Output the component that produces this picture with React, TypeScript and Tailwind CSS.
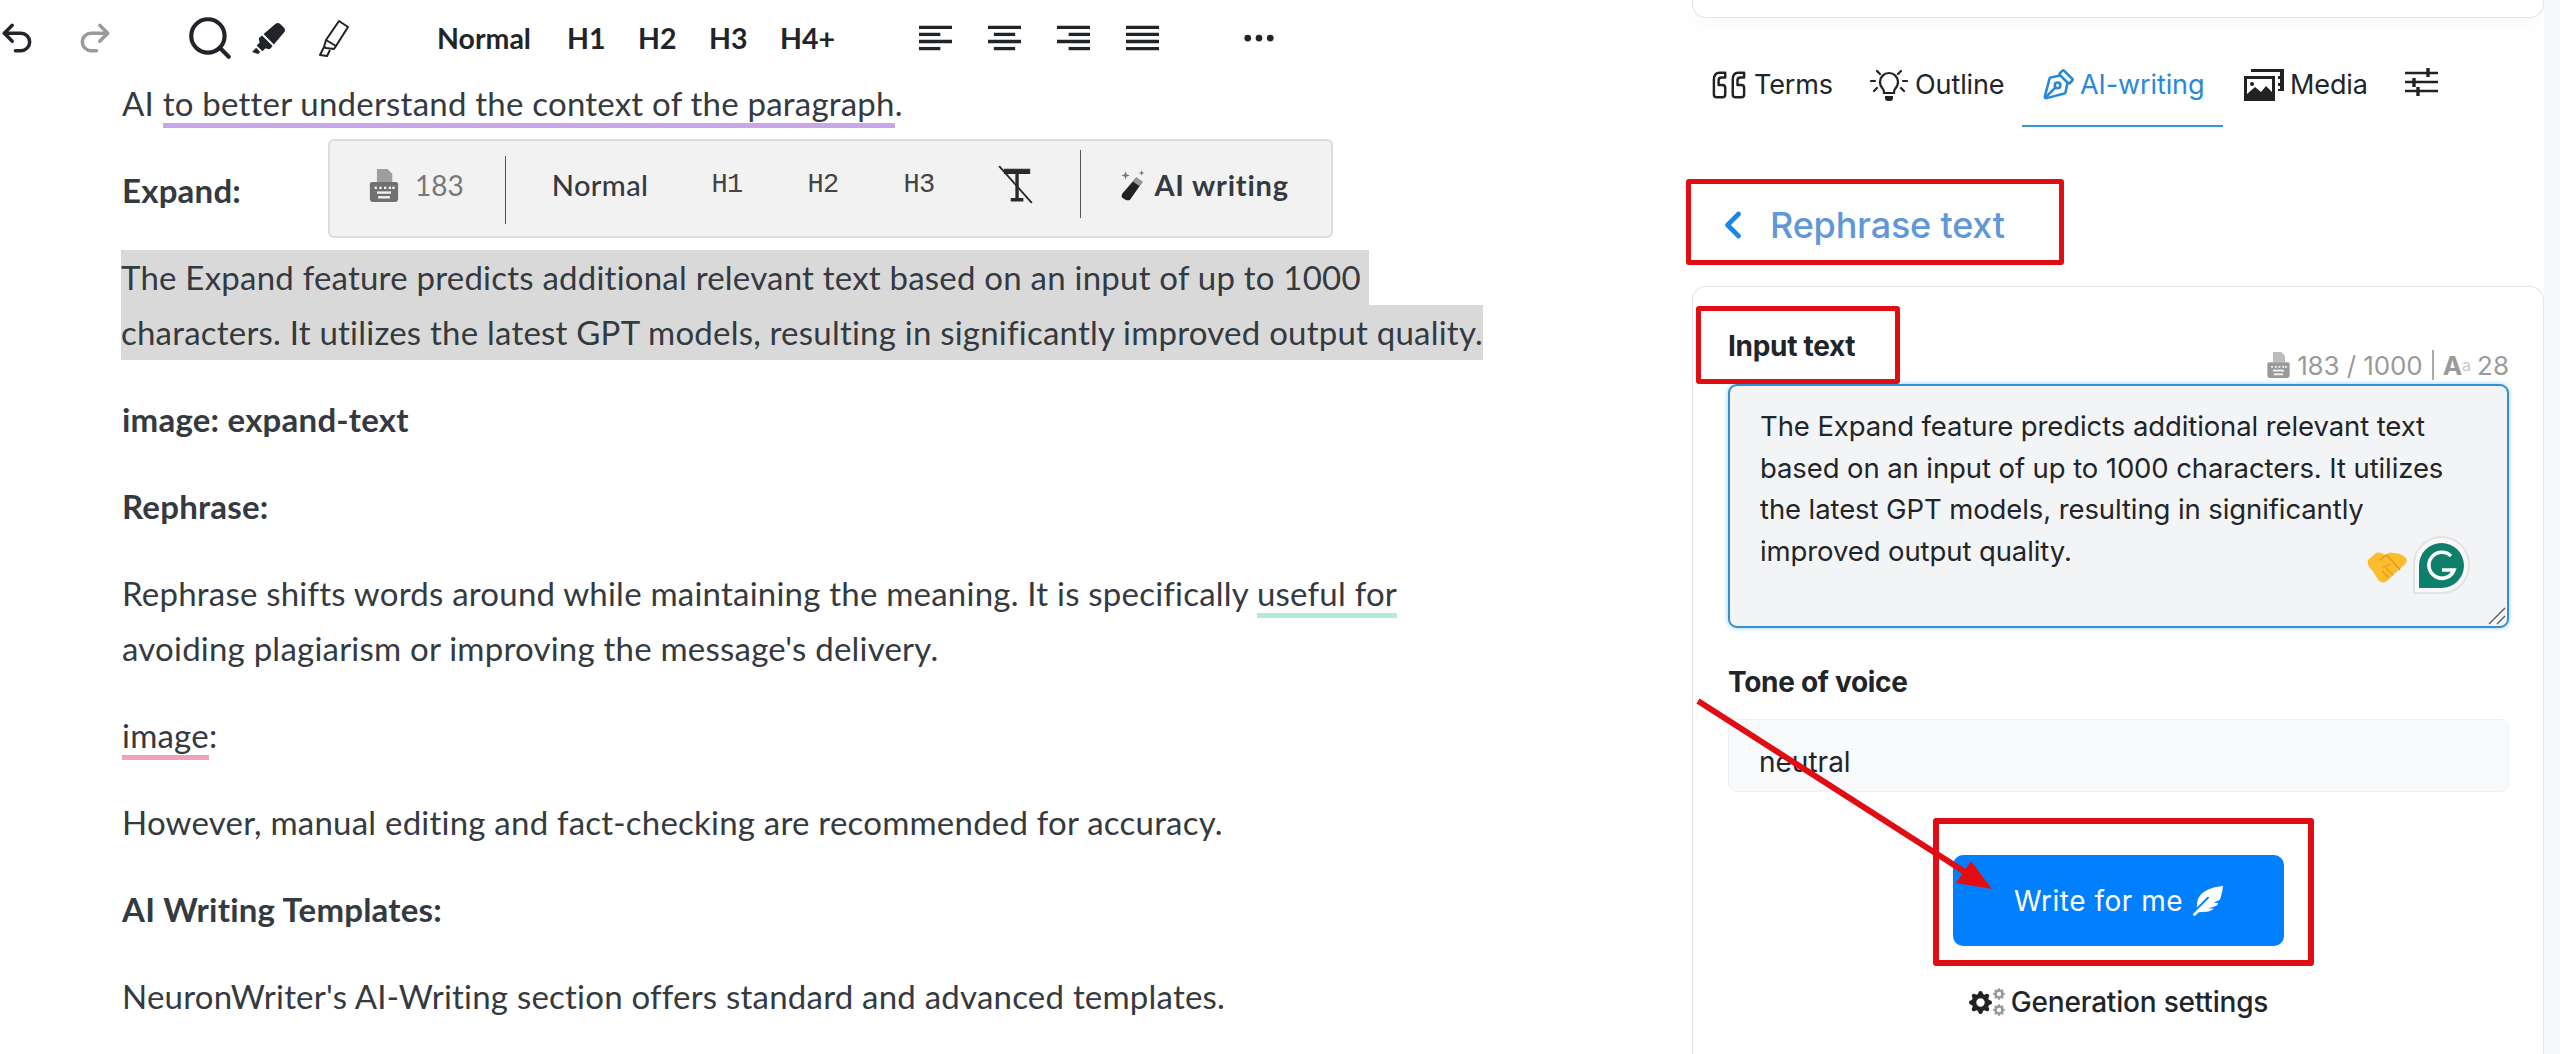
import React from "react";
import { BsThreeDots, BsGearFill } from "react-icons/bs";
import { FaFeatherAlt, FaHighlighter } from "react-icons/fa";
import { LuUndo2, LuRedo2, LuSearch, LuChevronLeft, LuPenTool } from "react-icons/lu";

const Typewriter = ({ className }: { className?: string }) => (
  <svg viewBox="0 0 24 28" className={className} fill="currentColor">
    <path d="M6 0h9l4 4v7H6z" opacity="0.65" />
    <path d="M2 11h20a2 2 0 0 1 2 2v12a3 3 0 0 1-3 3H3a3 3 0 0 1-3-3V13a2 2 0 0 1 2-2z" />
    <g fill="#f2f2f2">
      <rect x="4" y="15" width="2" height="2" /><rect x="8" y="15" width="2" height="2" /><rect x="12" y="15" width="2" height="2" /><rect x="16" y="15" width="2" height="2" /><rect x="19" y="15" width="2" height="2" />
      <rect x="6" y="19" width="12" height="2" />
      <rect x="7" y="23" width="10" height="2" />
    </g>
  </svg>
);

const Align = ({ rows }: { rows: [number, number][] }) => (
  <svg width="33" height="28" viewBox="0 0 34 28" stroke="#212529" strokeWidth="3.4" className="shrink-0">
    {rows.map(([a, b], i) => (
      <line key={i} x1={a} x2={b} y1={3 + i * 7.3} y2={3 + i * 7.3} />
    ))}
  </svg>
);

const Quotes = () => (
  <svg width="36" height="30" viewBox="0 0 37 30" fill="none" stroke="#222" strokeWidth="2.6" strokeLinejoin="round">
    <path d="M14 2H8C4 2 2 5 2 9v16c0 2 1 3 3 3h6c2 0 3-1 3-3v-7c0-2-1-3-3-3H7V10c0-2 1-3 3-3h4z" />
    <path d="M34 2h-6c-4 0-6 3-6 7v16c0 2 1 3 3 3h6c2 0 3-1 3-3v-7c0-2-1-3-3-3h-4V10c0-2 1-3 3-3h4z" />
  </svg>
);

const Bulb = () => (
  <svg width="38" height="34" viewBox="0 0 38 34" fill="none" stroke="#222" strokeWidth="2.2" strokeLinecap="round">
    <path d="M13 21c-2-2-3-4-3-7a9 9 0 0 1 18 0c0 3-1 5-3 7-1 1-1 3-1 4H14c0-1 0-3-1-4z" />
    <path d="M15 28h8v2a3 3 0 0 1-3 3h-2a3 3 0 0 1-3-3z" fill="#222" stroke="none" />
    <path d="M7 3l3 3M31 3l-3 3M1 13h4M33 13h4M4 23l3-3M34 23l-3-3" />
  </svg>
);

const MediaIcon = () => (
  <svg width="40" height="32" viewBox="0 0 40 32" fill="#222">
    <path d="M7 0h33v22h-6V3H7z" />
    <rect x="33" y="3" width="3" height="4" fill="#fff" /><rect x="33" y="10" width="3" height="4" fill="#fff" /><rect x="33" y="17" width="3" height="3" fill="#fff" />
    <path fillRule="evenodd" d="M0 7h31v25H0zM3 10v15l8-7 6 5 5-6 6 6V10z" />
    <circle cx="8" cy="15" r="2" />
  </svg>
);

const Sliders = () => (
  <svg width="33" height="28" viewBox="0 0 33 28" stroke="#222" fill="none" strokeWidth="2.6">
    <path d="M0 5h33M0 14h33M0 23h33" />
    <path d="M23 0v9M9 10v9M13 19v9" strokeWidth="3.4" />
  </svg>
);

const OutlineMarker = () => (
  <svg width="35" height="38" viewBox="0 0 35 38" fill="none" stroke="#222" strokeWidth="2" strokeLinejoin="round">
    <path d="M24 2l9 6-12 19-10-6z" />
    <path d="M11 21l-2 7 2 1 8 1 2-3" />
    <path d="M9 28l-4 8 7 1 3-6" />
  </svg>
);

const Wand = () => (
  <svg width="26" height="32" viewBox="0 0 22 30" fill="#222">
    <path d="M15 8l6 4L9 29c-2 1-5 0-7-2-1-1-1-2 0-4z" />
    <path d="M15 8l6 4-3 4-6-4z" fill="#999" />
    <path d="M5 2l1 3 3 1-3 1-1 3-1-3-3-1 3-1zM20 1l.7 2 2 .7-2 .7-.7 2-.7-2-2-.7 2-.7z" fill="#777" />
  </svg>
);

const ClearFormat = () => (
  <svg width="40" height="40" viewBox="0 0 38 38" fill="none" stroke="#2a2a2a">
    <path d="M8 4h24v4H8z" fill="#2a2a2a" />
    <path d="M20 6v26M14 33h12" strokeWidth="3.2" />
    <path d="M3 1l31 35" strokeWidth="1.8" />
  </svg>
);

const Gears = () => (
  <span className="relative block h-[28px] w-[36px] shrink-0">
    <BsGearFill className="absolute left-0 top-[3px] text-[23px] text-[#222]" />
    <BsGearFill className="absolute right-0 top-0 text-[12px] text-[#999]" />
    <BsGearFill className="absolute right-0 bottom-0 text-[12px] text-[#999]" />
  </span>
);

const Grammarly = () => (
  <span className="flex h-[58px] w-[57px] items-center justify-center rounded-t-full rounded-r-full rounded-bl-none border-2 border-[#e3e3e6] bg-[#f8f8f9]">
    <svg width="47" height="47" viewBox="0 0 47 47">
      <path d="M23.5 1a22.5 22.5 0 0 1 0 45H1V23.5A22.5 22.5 0 0 1 23.5 1z" fill="#0e7f6b" />
      <path d="M33 14a13 13 0 1 0 3 14H24" fill="none" stroke="#fff" strokeWidth="3.6" />
    </svg>
  </span>
);

const P = ({ children, bold }: { children: React.ReactNode; bold?: boolean }) => (
  <p className={`mb-[32px] ${bold ? "font-bold" : ""}`}>{children}</p>
);

export default function App() {
  return (
    <div className="relative flex h-[1054px] w-[2560px] overflow-hidden bg-white font-['Lato',sans-serif] text-[#343a40]">
      {/* Editor */}
      <main className="w-[1692px] shrink-0">
        <div className="flex h-[76px] items-center text-[#212529]">
          <LuUndo2 className="ml-[-2px] text-[38px]" strokeWidth={2.2} />
          <LuRedo2 className="ml-[40px] text-[38px] text-[#9a9a9a]" strokeWidth={2.2} />
          <LuSearch className="ml-[71px] text-[50px]" strokeWidth={2} />
          <FaHighlighter className="ml-[17px] text-[33px]" />
          <span className="ml-[30px]"><OutlineMarker /></span>
          <div className="ml-[87px] flex items-center gap-[32px] text-[28.5px] font-bold">
            <span className="w-[98px]">Normal</span>
            <span className="w-[39px]">H1</span>
            <span className="w-[39px]">H2</span>
            <span className="w-[39px]">H3</span>
            <span className="w-[55px]">H4+</span>
          </div>
          <div className="ml-[84px] flex gap-[36px]">
            <Align rows={[[0, 34], [0, 22], [0, 34], [0, 22]]} />
            <Align rows={[[0, 34], [6, 28], [0, 34], [6, 28]]} />
            <Align rows={[[0, 34], [12, 34], [0, 34], [12, 34]]} />
            <Align rows={[[0, 34], [0, 34], [0, 34], [0, 34]]} />
          </div>
          <BsThreeDots className="ml-[82px] text-[36px]" />
        </div>
        <article className="relative w-[1560px] pl-[122px] text-[33px] leading-[55px] tracking-[0.22px]">
          <P>
            AI{" "}
            <span className="pb-[5px] [box-shadow:inset_0_-5px_0_#c9a6e8]">to better understand the context of the paragraph</span>.
          </P>
          <P bold>Expand:</P>
          <p className="mb-[32px] ml-[-1px]">
            <span className="inline-block h-[55px] bg-[#d9d9d9] pr-[8px]">
              The Expand feature predicts additional relevant text based on an input of up to 1000
            </span>
            <br />
            <span className="inline-block h-[55px] bg-[#d9d9d9]">
              characters. It utilizes the latest GPT models, resulting in significantly improved output quality.
            </span>
          </p>
          <P bold>image: expand-text</P>
          <P bold>Rephrase:</P>
          <P>
            Rephrase shifts words around while maintaining the meaning. It is specifically{" "}
            <span className="pb-[5px] [box-shadow:inset_0_-5px_0_#b2ecd9]">useful for</span>
            <br />
            avoiding plagiarism or improving the message's delivery.
          </P>
          <P>
            <span className="pb-[5px] [box-shadow:inset_0_-5px_0_#efa3b8]">image</span>:
          </P>
          <P>However, manual editing and fact-checking are recommended for accuracy.</P>
          <P bold>AI Writing Templates:</P>
          <P>NeuronWriter's AI-Writing section offers standard and advanced templates.</P>
        </article>
      </main>

      {/* Side panel */}
      <aside className="flex w-[852px] shrink-0 flex-col font-['Inter',sans-serif] text-[#212529]">
        <div className="h-[18px] rounded-b-[14px] border border-t-0 border-[#e6e6e6] bg-white shadow-[0_8px_14px_rgba(0,0,0,0.025)]" />
        <nav className="mt-[47px] flex h-[62px] items-start text-[27px] tracking-[-0.1px]">
          <div className="ml-[20px] flex w-[121px] items-center gap-[7px]"><Quotes /><span>Terms</span></div>
          <div className="ml-[37px] flex w-[137px] items-center gap-[7px]"><Bulb /><span>Outline</span></div>
          <div className="ml-[15px] flex h-[62px] w-[201px] items-start gap-[4px] border-b-2 border-[#3b97d3] pl-[20px] text-[#2a88d8]">
            <LuPenTool className="mt-[2px] -rotate-90 text-[34px]" strokeWidth={1.8} /><span>AI-writing</span>
          </div>
          <div className="ml-[21px] flex w-[125px] items-center gap-[6px]"><MediaIcon /><span>Media</span></div>
          <span className="ml-[36px] mt-[3px]"><Sliders /></span>
        </nav>
        <div className="mt-[62px] flex h-[72px] items-center pl-[28px] text-[36px] font-medium tracking-[-0.2px] text-[#5f97d8]">
          <LuChevronLeft className="ml-[-9px] text-[44px] text-[#1c86e4]" strokeWidth={2.6} />
          <span className="ml-[15px]">Rephrase text</span>
        </div>
        <section className="mt-[25px] flex-1 rounded-t-[14px] border border-b-0 border-[#e6e6e6] bg-white pl-[35px] pr-[34px]">
          <div className="flex h-[97px]">
            <span className="mt-[43px] text-[28px] font-bold leading-[32px] tracking-[-0.3px]">Input text</span>
            <div className="ml-auto mt-[63px] flex h-[30px] items-center text-[26px] text-[#9a9a9a]">
              <Typewriter className="h-[26px] w-[23px]" />
              <span className="ml-[7px] tracking-[-0.1px]">183 / 1000</span>
              <span className="mx-[9px] h-[30px] w-[2px] bg-[#aaa]" />
              <span className="font-bold">A</span>
              <span className="text-[16px] text-[#c8c8c8]">a</span>
              <span className="ml-[6px]">28</span>
            </div>
          </div>
          <div className="relative h-[244px] rounded-[9px] border-2 border-[#3390d4] bg-[#f3f4f6] pl-[30px] pr-[28px] pt-[20px] text-[27.5px] leading-[41.5px] tracking-[-0.1px] shadow-[0_0_5px_rgba(60,160,230,0.55)]">
            The Expand feature predicts additional relevant text based on an input of up to 1000 characters. It utilizes the latest GPT models, resulting in significantly improved output quality.
            <div className="absolute left-[636px] top-[156px] flex items-center gap-[5px]">
              <span className="h-[34px] w-[42px]">
                <svg width="42" height="34" viewBox="0 0 42 34">
                  <path d="M2 9l8-7c3-1 6 0 9 2 4-3 7-3 9-2 3 0 8 1 12 5 2 3 0 6-4 9l-14 13c-3 3-6 3-9 1L6 19c-3-2-5-7-4-10z" fill="#fbbd2e" />
                  <path d="M14 9l6-5M20 4c3 3 7 6 14 15M24 13l-7 4M16 20l7 7M20 17l7 7" stroke="#e09a1c" strokeWidth="1.4" fill="none" />
                </svg>
              </span>
              <span className="mt-[-6px]"><Grammarly /></span>
            </div>
            <svg width="18" height="18" viewBox="0 0 18 18" className="absolute bottom-[1px] right-[1px]" stroke="#555" strokeWidth="1.3">
              <path d="M1 17L17 1M9 17l8-8" />
            </svg>
          </div>
          <p className="mt-[38px] text-[28px] font-bold leading-[32px] tracking-[-0.3px]">Tone of voice</p>
          <div className="mt-[21px] flex h-[73px] items-center rounded-[9px] border border-[#edf1f5] bg-[#f8fafc] pl-[30px] pt-[12px] text-[28px]">
            neutral
          </div>
          <div className="mt-[63px] flex justify-center">
            <button className="flex h-[91px] w-[331px] items-center justify-center gap-[10px] rounded-[10px] bg-[#0080ff] text-[28px] font-normal tracking-[0.5px] text-white">
              Write for me <FaFeatherAlt className="text-[30px]" />
            </button>
          </div>
          <div className="mt-[35px] flex items-center justify-center gap-[6px] text-[28px] font-medium tracking-[-0.2px]">
            <Gears />
            <span>Generation settings</span>
          </div>
        </section>
      </aside>
      <div className="flex-1 bg-[#f7f8f9]" />

      {/* Floating selection toolbar */}
      <div className="absolute left-[328px] top-[139px] flex h-[99px] w-[1005px] items-center rounded-[6px] border-2 border-[#dcdcdc] bg-[#f2f2f2] pb-[7px] text-[#343a40]">
        <Typewriter className="ml-[38px] h-[33px] w-[32px] text-[#707070]" />
        <span className="ml-[15px] text-[28px] text-[#777]">183</span>
        <span className="ml-[41px] mt-[10px] h-[68px] w-[1px] bg-[#555]" />
        <span className="ml-[46px] text-[29px] font-medium tracking-[0.4px]">Normal</span>
        <div className="ml-[63px] flex gap-[63px] font-['Liberation_Mono',monospace] text-[27px] tracking-[-0.5px] text-[#444]">
          <span className="w-[33px]">H1</span>
          <span className="w-[33px]">H2</span>
          <span className="w-[33px]">H3</span>
        </div>
        <span className="ml-[60px]"><ClearFormat /></span>
        <span className="mb-[2px] ml-[44px] h-[68px] w-[1px] bg-[#555]" />
        <span className="ml-[38px]"><Wand /></span>
        <span className="ml-[9px] text-[29px] font-bold tracking-[0.8px]">AI writing</span>
      </div>

      {/* Annotations */}
      <div className="absolute left-[1686px] top-[179px] h-[86px] w-[378px] rounded-[3px] border-[5px] border-[#e20d13]" />
      <div className="absolute left-[1696px] top-[306px] h-[78px] w-[204px] rounded-[3px] border-[5px] border-[#e20d13]" />
      <div className="absolute left-[1933px] top-[818px] h-[148px] w-[381px] rounded-[3px] border-[6px] border-[#e20d13]" />
      <svg className="absolute left-[1690px] top-[695px]" width="310" height="200" viewBox="0 0 310 200">
        <line x1="8" y1="6" x2="275" y2="177" stroke="#e20d13" strokeWidth="6" />
        <path d="M302 194L266 188L281 166z" fill="#e20d13" />
      </svg>
    </div>
  );
}
